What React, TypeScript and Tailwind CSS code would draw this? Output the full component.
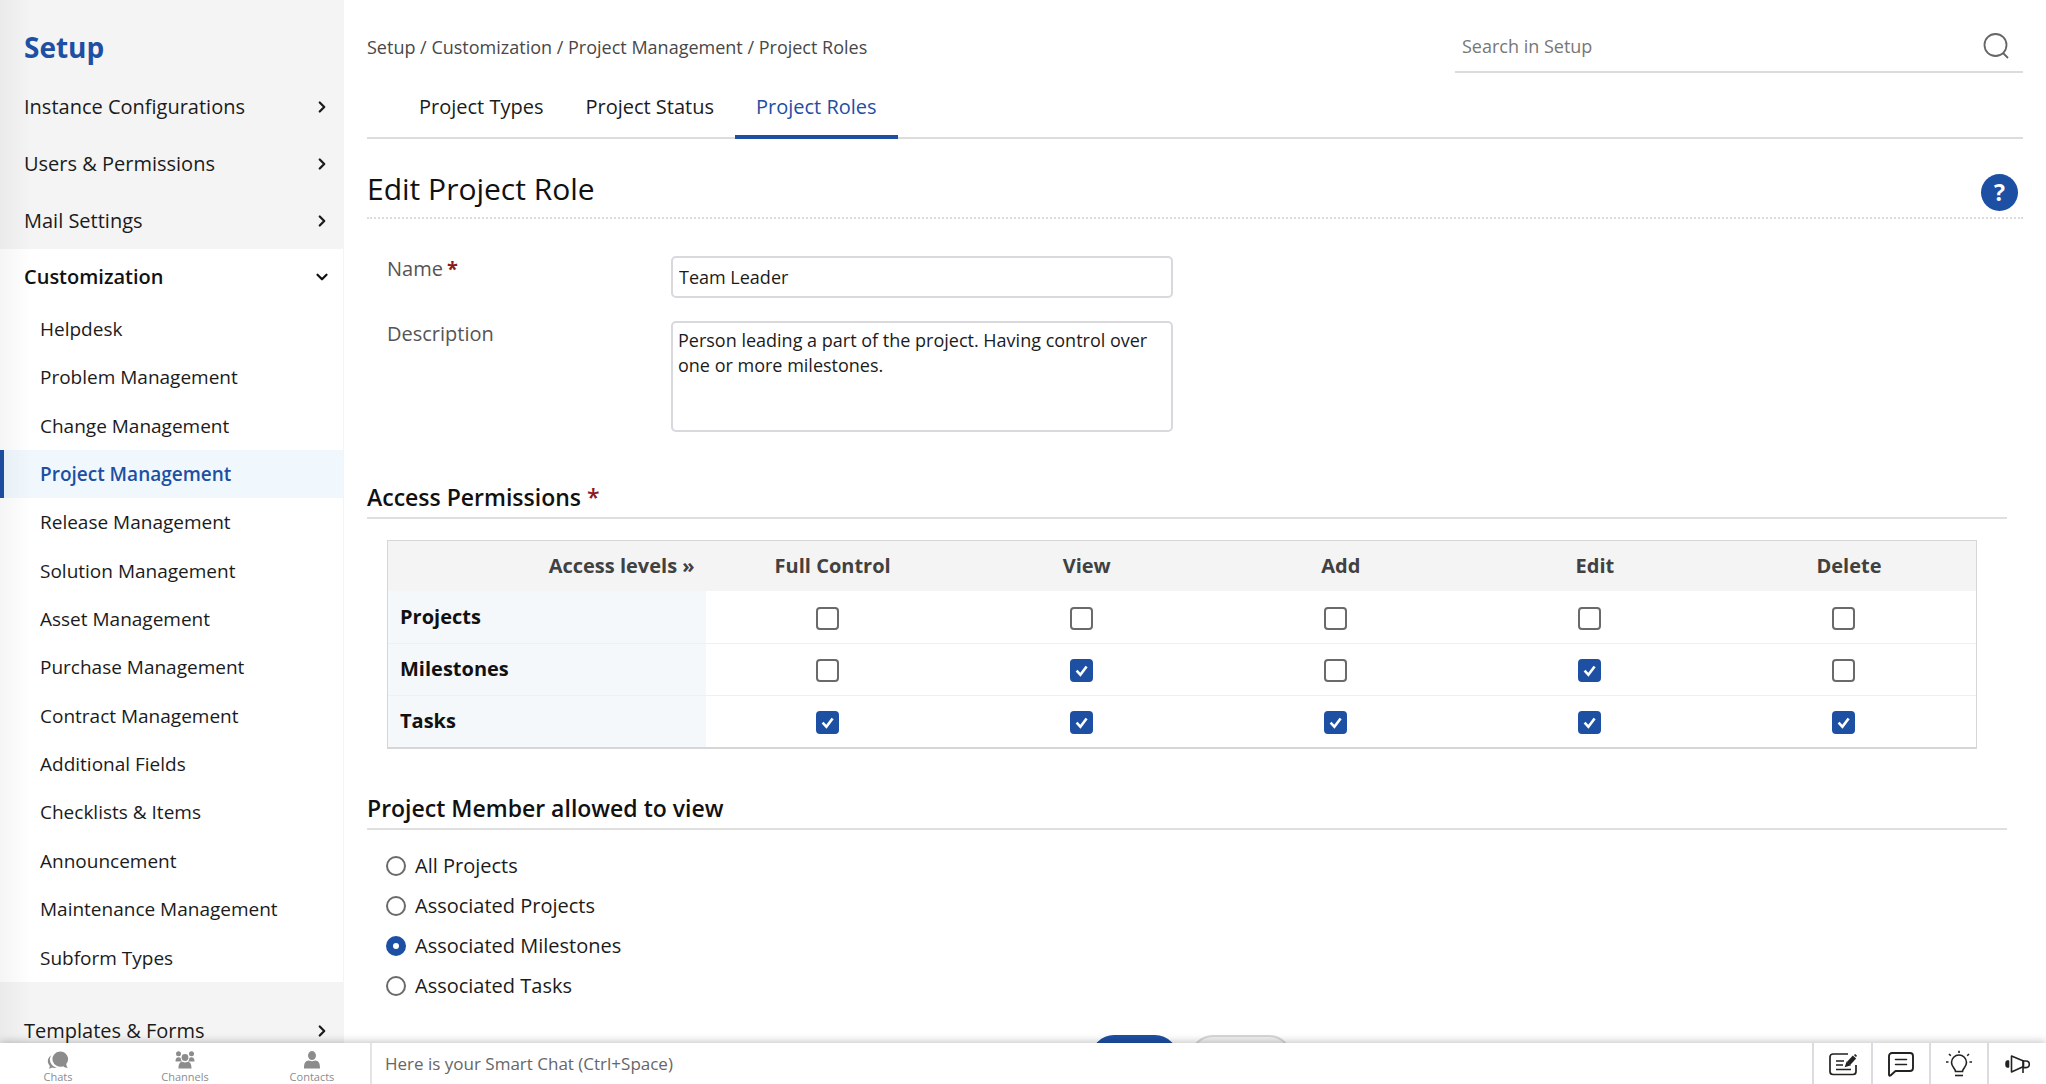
import { useState, type ReactNode } from "react";
import { ChevronDown, ChevronRight } from "lucide-react";

const TOP_SECTIONS = ["Instance Configurations", "Users & Permissions", "Mail Settings"];

const CUSTOMIZATION = [
  "Helpdesk",
  "Problem Management",
  "Change Management",
  "Project Management",
  "Release Management",
  "Solution Management",
  "Asset Management",
  "Purchase Management",
  "Contract Management",
  "Additional Fields",
  "Checklists & Items",
  "Announcement",
  "Maintenance Management",
  "Subform Types",
];

const TABS = ["Project Types", "Project Status", "Project Roles"];
const LEVELS = ["Full Control", "View", "Add", "Edit", "Delete"];
const SCOPES = ["All Projects", "Associated Projects", "Associated Milestones", "Associated Tasks"];

const INITIAL_ACCESS: Record<string, boolean[]> = {
  Projects: [false, false, false, false, false],
  Milestones: [false, true, false, true, false],
  Tasks: [true, true, true, true, true],
};

function SectionLink({ label }: { label: string }) {
  return (
    <a href="#" className="flex h-[57px] items-center justify-between pr-3 pl-6 text-[20px] text-[#1b1b1b]">
      {label}
      <ChevronRight className="size-[18px]" strokeWidth={3} />
    </a>
  );
}

function Sidebar() {
  return (
    <aside className="relative w-[344px] shrink-0 overflow-hidden border-r border-[#f4f4f4] bg-[#f4f4f4]">
      <h1 className="flex h-[78px] items-center pt-4 pl-6 text-[28px] font-bold text-[#1d4fa3]">Setup</h1>
      <nav aria-label="Setup">
        {TOP_SECTIONS.map((label) => (
          <SectionLink key={label} label={label} />
        ))}
        <div className="bg-white">
          <button
            type="button"
            aria-expanded="true"
            className="flex h-[56px] w-full items-center justify-between pr-3 pl-6 text-[20px] font-semibold text-[#111]"
          >
            Customization
            <ChevronDown className="size-[18px]" strokeWidth={3} />
          </button>
          <ul className="grid h-[677px] auto-rows-fr text-[19px]">
            {CUSTOMIZATION.map((label) => {
              const active = label === "Project Management";
              return (
                <li key={label} className="flex">
                  <a
                    href="#"
                    className={
                      active
                        ? "flex flex-1 items-center border-l-4 border-[#1d4fa3] bg-[#f0f8fe] pl-9 font-semibold text-[#1d4fa3]"
                        : "flex flex-1 items-center pl-10 text-[#1b1b1b]"
                    }
                  >
                    {label}
                  </a>
                </li>
              );
            })}
          </ul>
        </div>
        <div className="pt-5">
          <SectionLink label="Templates & Forms" />
        </div>
      </nav>
      {/* soft shade along the window edge */}
      <div className="pointer-events-none absolute inset-y-0 left-0 w-8 bg-linear-to-r from-black/4 to-transparent" />
    </aside>
  );
}

function SectionTitle({ children }: { children: ReactNode }) {
  return (
    <h3 className="mr-4 border-b-2 border-[#dfdfdf] pb-1 text-[23px] leading-8 font-semibold text-[#111]">
      {children}
    </h3>
  );
}

function AccessTable() {
  const [access, setAccess] = useState(INITIAL_ACCESS);

  function toggle(row: string, col: number) {
    setAccess((prev) => ({
      ...prev,
      [row]: prev[row].map((on, i) => (i === col ? !on : on)),
    }));
  }

  return (
    <div className="mt-[21px] mr-[46px] ml-5 border border-b-2 border-[#d6d6d6]">
      <table className="w-full table-fixed text-[20px] leading-7">
        <thead>
          <tr className="h-[50px] bg-[#f4f4f4] text-[#414141]">
            <th scope="col" className="w-1/5 pr-[11px] text-right font-bold">
              Access levels »
            </th>
            {LEVELS.map((level) => (
              <th key={level} scope="col" className="w-4/25 font-bold">
                {level}
              </th>
            ))}
          </tr>
        </thead>
        <tbody>
          {Object.keys(access).map((row) => (
            <tr key={row} className="h-[52px] border-b border-[#f0f0f0] last:border-b-0">
              <th scope="row" className="bg-[#f4f8fa] pl-3 text-left font-bold text-[#111]">
                {row}
              </th>
              {LEVELS.map((level, col) => (
                <td key={level} className="pr-[10px] text-center">
                  <span className="relative inline-block size-[23px] align-middle">
                    <input
                      type="checkbox"
                      aria-label={`${row}: ${level}`}
                      checked={access[row][col]}
                      onChange={() => toggle(row, col)}
                      className="peer block size-[23px] appearance-none rounded-[4px] border-2 border-[#6a6a6a] bg-white checked:border-[#1d4fa3] checked:bg-[#1d4fa3]"
                    />
                    <svg
                      viewBox="0 0 23 23"
                      className="pointer-events-none absolute inset-0 hidden peer-checked:block"
                      fill="none"
                      stroke="#fff"
                      strokeWidth="2.6"
                    >
                      <path d="M6.6 11.6l3.8 4.2 6.2-8.4" />
                    </svg>
                  </span>
                </td>
              ))}
            </tr>
          ))}
        </tbody>
      </table>
    </div>
  );
}

function ChatBar() {
  return (
    <footer className="relative z-10 flex h-[41px] shrink-0 bg-white text-[#8c8c8c] shadow-[0_-1px_8px_rgba(0,0,0,0.25)]">
      <div className="flex w-[372px] shrink-0 justify-between border-r-2 border-[#e4e4e4] px-[30px] text-[11px] leading-3">
        <button type="button" className="flex w-14 flex-col items-center pt-2">
          <svg viewBox="0 0 22 18" className="h-[18px] w-[22px]" fill="currentColor">
            <path d="M13 0.5a8 7.6 0 0 1 6.2 12.4c.1 1.5.8 2.8 1.6 3.8-1.9 0-3.4-.5-4.5-1.5A8 7.6 0 1 1 13 .5z" />
            <path d="M4.2 4.2a7.8 7.8 0 0 0 5.6 12.1c-1.5.7-3.2.8-4.7.3-.9.7-2 1.1-3.4 1.1.7-.8 1.1-1.7 1.2-2.7C-.3 11.8.2 6.8 4.2 4.2z" />
          </svg>
          <span className="mt-0.5">Chats</span>
        </button>
        <button type="button" className="flex w-14 flex-col items-center pt-2">
          <svg viewBox="0 0 22 18" className="h-[18px] w-[22px]" fill="currentColor">
            <circle cx="4.5" cy="2.8" r="2.5" />
            <circle cx="17.5" cy="2.8" r="2.5" />
            <circle cx="11" cy="6.5" r="3.4" />
            <path d="M1.5 10.5c0-3 1-4.2 3.2-4.2 1 0 1.6.2 2 .6 0 1.6.5 2.7 1.5 3.6zM20.5 10.5c0-3-1-4.2-3.2-4.2-1 0-1.6.2-2 .6 0 1.6-.5 2.7-1.5 3.6z" />
            <path d="M4.5 17.5c0-4.5 1.2-6.6 4-6.8 1.5 1 3.5 1 5 0 2.8.2 4 2.3 4 6.8z" />
          </svg>
          <span className="mt-0.5">Channels</span>
        </button>
        <button type="button" className="flex w-14 flex-col items-center pt-2">
          <svg viewBox="0 0 22 18" className="h-[18px] w-[22px]" fill="currentColor">
            <ellipse cx="11" cy="4.6" rx="4" ry="4.5" />
            <path d="M3 17.5c0-5.5 1.3-7.8 5-8 1.8 1.1 4.2 1.1 6 0 3.7.2 5 2.5 5 8z" />
          </svg>
          <span className="mt-0.5">Contacts</span>
        </button>
      </div>
      <input
        aria-label="Smart Chat"
        placeholder="Here is your Smart Chat (Ctrl+Space)"
        className="min-w-0 flex-1 px-[13px] text-[17px] outline-none placeholder:text-[#666]"
      />
      <div className="flex text-[#222]">
        <button type="button" aria-label="Notes" className="flex w-[59px] items-center justify-center border-l-2 border-[#dcdce0]">
          <svg viewBox="0 0 28 24" className="h-6 w-7" fill="none" stroke="currentColor" strokeWidth="1.7">
            <path d="M19 2H4a3 3 0 0 0-3 3v14.5a3 3 0 0 0 3 3h20a3 3 0 0 0 3-3V13" />
            <path d="M7 9h8M7 13h7M7 17.5h15" />
            <path d="M19.5 11.5l6-6.5" strokeWidth="4.5" />
            <path d="M17 14l1-3 2.3 2z" fill="currentColor" />
            <path d="M25.5 2.5l2 2" />
          </svg>
        </button>
        <button type="button" aria-label="Messages" className="flex w-[58px] items-center justify-center border-l-2 border-[#dcdce0]">
          <svg viewBox="0 0 26 26" className="size-[26px]" fill="none" stroke="currentColor" strokeWidth="1.9" strokeLinejoin="round">
            <path d="M4 2h18a3 3 0 0 1 3 3v12a3 3 0 0 1-3 3H7.5L2.500 24.500c-.8.5-1.500.2-1.500-.8V5a3 3 0 0 1 3-3z" />
            <path d="M7.5 8.500h11M7.500 13.500h11" strokeLinecap="round" strokeWidth="1.5" />
          </svg>
        </button>
        <button type="button" aria-label="Tips" className="flex w-[58px] items-center justify-center border-l-2 border-[#dcdce0]">
          <svg viewBox="0 0 28 28" className="size-7" fill="none" stroke="currentColor" strokeWidth="1.6">
            <path d="M10.5 21.5c0-3-4-4.500-4-9a7.500 7.500 0 0 1 15 0c0 4.500-4 6-4 9z" />
            <path d="M10 25.5h8" />
            <path d="M14 3V.8M5.8 5.800L4 4M22.200 5.800L24 4M3.500 12H1M24.500 12H27" />
          </svg>
        </button>
        <button type="button" aria-label="Announcements" className="flex w-[59px] items-center justify-center border-l-2 border-[#dcdce0]">
          <svg viewBox="0 0 26 22" className="h-[22px] w-[26px]" fill="none" stroke="currentColor" strokeWidth="1.6" strokeLinejoin="round">
            <path d="M3.5 8v6H2.5C1.5 14 1 13 1 11s.5-3 1.5-3z" fill="currentColor" />
            <path d="M6.5 3v16L18.5 13.5V8z" />
            <path d="M18 8h3a3.3 3.3 0 0 1 0 6.6h-3M18 8v12" />
          </svg>
        </button>
      </div>
    </footer>
  );
}

export default function App() {
  const [name, setName] = useState("Team Leader");
  const [description, setDescription] = useState(
    "Person leading a part of the project. Having control over one or more milestones.",
  );
  const [scope, setScope] = useState("Associated Milestones");

  return (
    <div className="flex h-screen flex-col bg-white font-['Open_Sans','Noto_Sans',sans-serif] text-[#1b1b1b]">
      <div className="flex min-h-0 flex-1">
        <Sidebar />
        <main className="min-w-0 flex-1 overflow-hidden px-[23px]">
          <header className="flex h-[73px] items-end justify-between">
            <p className="pb-3.5 text-[18px] leading-6 text-[#484848]">
              Setup / Customization / Project Management / Project Roles
            </p>
            <label className="flex h-[52px] w-[568px] items-center border-b-2 border-[#dcdcdc] pr-3.5">
              <input
                type="search"
                aria-label="Search in Setup"
                placeholder="Search in Setup"
                className="min-w-0 flex-1 px-[7px] text-[18px] outline-none placeholder:text-[#777]"
              />
              <svg viewBox="0 0 26 26" className="size-[26px]" fill="none" stroke="#666" strokeWidth="1.8">
                <circle cx="12.5" cy="12" r="11" />
                <path d="M20 20l5 5" />
              </svg>
            </label>
          </header>

          <nav aria-label="Project settings" className="flex h-[66px] border-b-2 border-[#dcdcdc] pl-[31px] text-[20px]">
            {TABS.map((tab) => (
              <a
                key={tab}
                href="#"
                className={
                  tab === "Project Roles"
                    ? "-mb-0.5 flex items-center border-b-4 border-[#1d4fa3] px-[21px] pt-1.5 text-[#1d4fa3]"
                    : "flex items-center px-[21px] pt-1"
                }
              >
                {tab}
              </a>
            ))}
          </nav>

          <div className="flex h-20 items-end justify-between border-b-2 border-dotted border-[#dcdcdc] pr-[5px] pb-1.5">
            <h2 className="pb-1 text-[30px] leading-9 text-[#111]">Edit Project Role</h2>
            <button type="button" aria-label="Help" className="size-[37px] rounded-full bg-[#1d4fa3] text-[23px] font-bold text-white">
              ?
            </button>
          </div>

          <form onSubmit={(e) => e.preventDefault()}>
            <div className="ml-5 grid grid-cols-[284px_502px] gap-y-[23px] pt-[37px]">
              <label htmlFor="role-name" className="text-[20px] leading-[26px] text-[#555]">
                Name<span className="ml-1 font-bold text-[#8b1a1a]">*</span>
              </label>
              <input
                id="role-name"
                value={name}
                onChange={(e) => setName(e.target.value)}
                className="h-[42px] rounded-[5px] border-2 border-[#d9d9dd] px-1.5 text-[18px] outline-none"
              />
              <label htmlFor="role-description" className="text-[20px] leading-[26px] text-[#555]">
                Description
              </label>
              <textarea
                id="role-description"
                value={description}
                onChange={(e) => setDescription(e.target.value)}
                className="h-[111px] resize-none rounded-[5px] border-2 border-[#d9d9dd] px-[5px] py-[5px] text-[18px] leading-[25px] outline-none"
              />
            </div>

            <div className="pt-[49px]">
              <SectionTitle>
                Access Permissions <span className="text-[#8b1a1a]">*</span>
              </SectionTitle>
              <AccessTable />
            </div>

            <fieldset className="pt-[43px]">
              <SectionTitle>Project Member allowed to view</SectionTitle>
              <div className="flex flex-col items-start pt-4 pl-[19px]">
                {SCOPES.map((label) => (
                  <label key={label} className="flex h-10 items-center gap-[9px] text-[20px]">
                    <input
                      type="radio"
                      name="scope"
                      checked={scope === label}
                      onChange={() => setScope(label)}
                      className="size-5 appearance-none rounded-full border-2 border-[#6a6a6a] bg-white checked:border-[7px] checked:border-[#1d4fa3]"
                    />
                    {label}
                  </label>
                ))}
              </div>
            </fieldset>

            <div className="flex justify-center gap-3 pt-[29px] pr-[7px]">
              <button type="submit" aria-label="Save" className="h-[46px] w-[87px] rounded-full bg-[#1d4fa3]" />
              <button
                type="button"
                aria-label="Cancel"
                className="h-[46px] w-[102px] rounded-full border-2 border-[#d6d6d6] bg-[#f1f1f1]"
              />
            </div>
          </form>
        </main>
      </div>
      <ChatBar />
    </div>
  );
}
